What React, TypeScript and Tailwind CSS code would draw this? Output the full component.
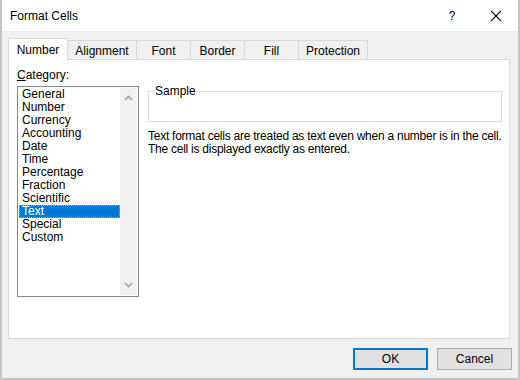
import React from "react";

const tabs = [
  { label: "Number", w: "w-[60px]" },
  { label: "Alignment", w: "w-[69px]" },
  { label: "Font", w: "w-[54px]" },
  { label: "Border", w: "w-[54px]" },
  { label: "Fill", w: "w-[54px]" },
  { label: "Protection", w: "w-[69px]" },
];

const categories = [
  "General",
  "Number",
  "Currency",
  "Accounting",
  "Date",
  "Time",
  "Percentage",
  "Fraction",
  "Scientific",
  "Text",
  "Special",
  "Custom",
];

const Chevron: React.FC<{ down?: boolean }> = ({ down }) => (
  <svg width="9" height="6" viewBox="0 0 9 6" className="block">
    <path
      d={down ? "M1 1 L4.5 4.5 L8 1" : "M1 5 L4.5 1.5 L8 5"}
      fill="none"
      stroke="#a6a6a6"
      strokeWidth="1.6"
    />
  </svg>
);

const App: React.FC = () => {
  return (
    <div className="w-[520px] h-[380px] bg-[#f0f0f0] border-x-2 border-b-2 border-[#c2c2c2] flex flex-col font-['Liberation_Sans',sans-serif] text-[12px] text-black">
      {/* title bar */}
      <div className="h-[31px] bg-white flex items-center pl-[8px] pr-[16px]">
        <div className="flex-1 text-[12px]">Format Cells</div>
        <div className="w-[10px] text-center mr-[33px]">?</div>
        <svg width="12" height="12" viewBox="0 0 12 12">
          <path d="M1 1 L11 11 M11 1 L1 11" stroke="#111" strokeWidth="1.1" />
        </svg>
      </div>

      {/* tabs */}
      <div className="h-[28px] flex items-end pl-[6px]">
        {tabs.map((t, i) =>
          i === 0 ? (
            <div
              key={t.label}
              className={`${t.w} h-[22px] -mb-px relative z-10 bg-white border border-b-0 border-[#d9d9d9] flex items-center justify-center pt-[1px]`}
            >
              {t.label}
            </div>
          ) : (
            <div
              key={t.label}
              className={`${t.w} h-[19px] border-t border-r border-[#d9d9d9] flex items-center justify-center pt-[2px]`}
            >
              {t.label}
            </div>
          )
        )}
      </div>

      {/* panel */}
      <div className="ml-[6px] w-[502px] h-[280px] bg-white border border-[#d9d9d9] flex pl-[8px] pt-[8px]">
        <div className="flex flex-col">
          <div className="h-[18px] leading-[14px]">
            <span className="underline">C</span>ategory:
          </div>
          <div className="w-[122px] h-[211px] border border-[#828790] flex p-px">
            <div className="flex-1 flex flex-col">
              {categories.map((c) =>
                c === "Text" ? (
                  <div
                    key={c}
                    className="h-[13px] leading-[11px] pl-[2px] bg-[#0078d7] text-white border border-dotted border-[#e6a04c]"
                  >
                    {c}
                  </div>
                ) : (
                  <div key={c} className="h-[13px] leading-[13px] pl-[3px]">
                    {c}
                  </div>
                )
              )}
            </div>
            <div className="w-[17px] bg-[#f0f0f0] flex flex-col items-center justify-between py-[7px]">
              <Chevron />
              <Chevron down />
            </div>
          </div>
        </div>

        <div className="ml-[9px] flex flex-col pt-[23px]">
          <fieldset className="w-[354px] h-[37px] border border-[#dcdcdc] -mt-[6px]">
            <legend className="ml-[6px] leading-[12px]">Sample</legend>
          </fieldset>
          <div className="mt-[8px] leading-[13px] whitespace-nowrap tracking-[-0.25px]">
            <div>Text format cells are treated as text even when a number is in the cell.</div>
            <div>The cell is displayed exactly as entered.</div>
          </div>
        </div>
      </div>

      {/* buttons */}
      <div className="flex justify-end gap-[9px] pr-[6px] pt-[9px]">
        <button className="w-[75px] h-[22px] bg-[#e1e1e1] border-2 border-[#0078d7]">OK</button>
        <button className="w-[75px] h-[22px] bg-[#e1e1e1] border border-[#adadad]">Cancel</button>
      </div>
    </div>
  );
};

export default App;
